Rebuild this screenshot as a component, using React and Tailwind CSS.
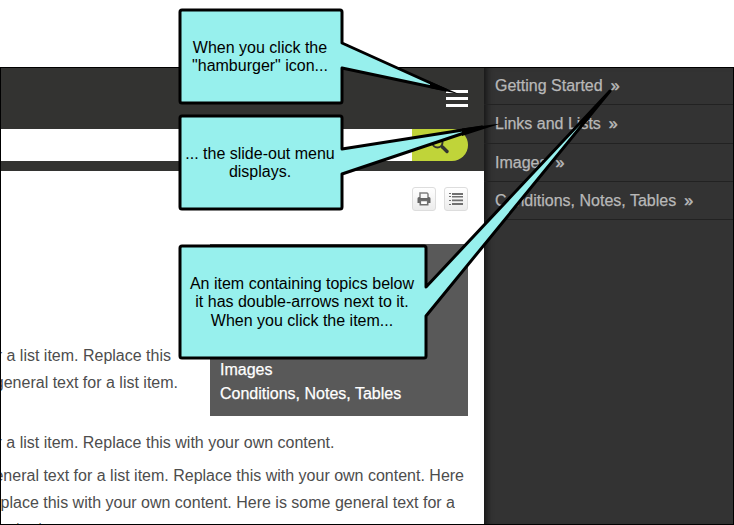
const menuItems = [
  { label: "Getting Started", height: "h-[37px]" },
  { label: "Links and Lists", height: "h-[39px]" },
  { label: "Images", height: "h-[38px]" },
  { label: "Conditions, Notes, Tables", height: "h-[38px]" },
];

function TextLine({ width, children }) {
  return (
    <div className={`flex justify-end overflow-hidden whitespace-nowrap ${width}`}>
      <span>{children}</span>
    </div>
  );
}

function Header() {
  return (
    <header className="bg-[#333331]">
      <div className="flex h-[61px] justify-end pt-[22px] pr-4">
        <div className="flex w-[22px] flex-col gap-1">
          <span className="h-[3px] bg-white" />
          <span className="h-[3px] bg-white" />
          <span className="h-[3px] bg-white" />
        </div>
      </div>
      <div className="flex h-8 pr-4">
        <div className="flex-1 bg-white" />
        <div className="flex w-14 items-center justify-center rounded-r-2xl bg-[#c0d439]">
          <svg width="20" height="20" viewBox="0 0 20 20" fill="none" stroke="#333331">
            <circle cx="7.5" cy="7.5" r="5" strokeWidth="2" />
            <path d="M11 10.5 L13 12.5" strokeWidth="2" />
            <path d="M12.5 12 L17 16.5" strokeWidth="3.4" strokeLinecap="round" />
          </svg>
        </div>
      </div>
      <div className="h-[10px]" />
    </header>
  );
}

function ToolButton({ children }) {
  return (
    <button className="flex size-6 items-center justify-center rounded-[3px] border border-[#dddddd] bg-linear-to-b from-white to-[#ececec]">
      {children}
    </button>
  );
}

function Toolbar() {
  return (
    <div className="flex h-[73px] justify-end gap-2 pt-4 pr-4">
      <ToolButton>
        <svg width="14" height="14" viewBox="0 0 14 14" className="shrink-0">
          <path d="M3 5.5V1H10L11 2V5.5" fill="none" stroke="#808080" strokeWidth="1.5" />
          <path d="M2 5H3.5V6H10.5V5H12Q13.5 5 13.5 6.5V11H11V8.5H3V11H.5V6.5Q.5 5 2 5Z" fill="#666" />
          <path d="M3.3 8.5V12.8H10.7V8.5Z" fill="#fff" stroke="#707070" strokeWidth="1.6" />
        </svg>
      </ToolButton>
      <ToolButton>
        <svg width="14" height="14" viewBox="0 0 14 14" className="shrink-0" fill="#707070">
          <path d="M0 1h2v1H0zM0 4h2v1H0zM0 8h2v1H0zM0 12h2v1H0zM3 1h11v2H3zM3 4h11v1.6H3zM3 7.6h11v1.6H3zM3 11h11v2H3z" />
        </svg>
      </ToolButton>
    </div>
  );
}

function Article() {
  return (
    <article className="text-base leading-[27px] text-[#4d4d4d]">
      <div className="flex h-[172px] justify-between pr-4">
        <div className="pt-[98px]">
          <TextLine width="w-[170px]">Here is some general text for a list item. Replace this</TextLine>
          <TextLine width="w-[177px]">with your own content. Here is some general text for a list item.</TextLine>
        </div>
        <div className="flex w-[258px] flex-col justify-end bg-[#595959] px-[10px] pb-[10px] leading-6 text-white [-webkit-text-stroke:0.25px_white]">
          <span>Images</span>
          <span>Conditions, Notes, Tables</span>
        </div>
      </div>
      <div className="pt-[13px]">
        <TextLine width="w-[333.5px]">Here is some general text for a list item. Replace this with your own content.</TextLine>
      </div>
      <div className="pt-[6px]">
        <TextLine width="w-[463px]">Here is some general text for a list item. Replace this with your own content. Here</TextLine>
        <TextLine width="w-[454px]">is some general text for a list item. Replace this with your own content. Here is some general text for a</TextLine>
        <div className="-mt-px">
          <TextLine width="w-[46px]">list item. Replace this with your own content.</TextLine>
        </div>
      </div>
    </article>
  );
}

function SlideMenu() {
  return (
    <nav className="w-[249px] bg-[#333333] text-base text-[#b8b8b8] shadow-[inset_7px_0_7px_-5px_#111111] [-webkit-text-stroke:0.25px_#b8b8b8]">
      {menuItems.map((item) => (
        <div key={item.label} className={`flex items-center gap-2 border-b border-[#222222] pl-[11px] ${item.height}`}>
          <span>{item.label}</span>
          <span className="[-webkit-text-stroke:0.5px_#b8b8b8]">»</span>
        </div>
      ))}
    </nav>
  );
}

const calloutText =
  "absolute flex flex-col items-center justify-center whitespace-nowrap text-base leading-[18px] text-black";

function Callouts() {
  return (
    <div className="absolute inset-0">
      <svg width="734" height="525" viewBox="0 0 734 525" fill="#97f0ed" stroke="#000" strokeWidth="3" strokeLinejoin="round">
        <path d="M182 10H340Q342 10 342 12V43L446 90L342 68V101Q342 103 340 103H182Q180 103 180 101V12Q180 10 182 10Z" />
        <path d="M430 81.5L459 94L430 88Z" fill="#000" stroke="none" />
        <path d="M182 116H340Q342 116 342 118V149L482 127L342 174V207Q342 209 340 209H182Q180 209 180 207V118Q180 116 182 116Z" />
        <path d="M462 128.6L501 123.5L462 136Z" fill="#000" stroke="none" />
        <path d="M182 246H424Q426 246 426 248V287L610 91L426 316V356Q426 358 424 358H182Q180 358 180 356V248Q180 246 182 246Z" />
      </svg>
      <div className={`${calloutText} top-[10px] left-[179px] h-[93px] w-[162px]`}>
        <span>When you click the</span>
        <span>"hamburger" icon...</span>
      </div>
      <div className={`${calloutText} top-[116px] left-[179px] h-[93px] w-[162px]`}>
        <span>... the slide-out menu</span>
        <span>displays.</span>
      </div>
      <div className={`${calloutText} top-[246px] left-[179px] h-[112px] w-[246px]`}>
        <span>An item containing topics below</span>
        <span>it has double-arrows next to it.</span>
        <span className="pt-px">When you click the item...</span>
      </div>
    </div>
  );
}

export default function App() {
  return (
    <div className="relative flex h-[525px] w-[734px] flex-col overflow-hidden bg-white pt-[67px] font-['Liberation_Sans',Arial,sans-serif]">
      <div className="flex h-[458px] overflow-hidden border border-black">
        <main className="w-[483px] overflow-hidden bg-white">
          <Header />
          <Toolbar />
          <Article />
        </main>
        <SlideMenu />
      </div>
      <Callouts />
    </div>
  );
}
